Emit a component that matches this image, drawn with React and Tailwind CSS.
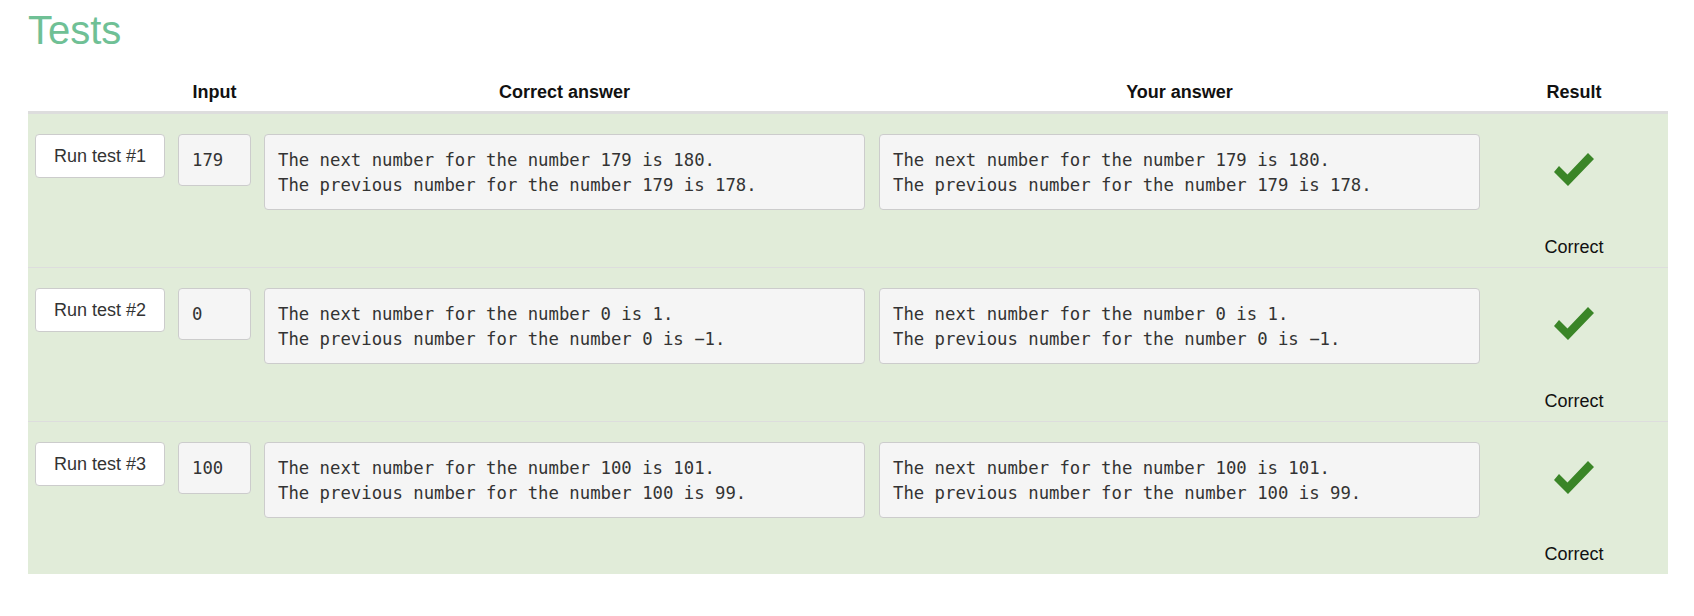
const tests = [
  {
    input: '179',
    expected: ['The next number for the number 179 is 180.', 'The previous number for the number 179 is 178.'],
  },
  {
    input: '0',
    expected: ['The next number for the number 0 is 1.', 'The previous number for the number 0 is \u22121.'],
  },
  {
    input: '100',
    expected: ['The next number for the number 100 is 101.', 'The previous number for the number 100 is 99.'],
  },
]

const mono = { fontFamily: '"DejaVu Sans Mono", "Liberation Mono", monospace' }

function CheckIcon() {
  return (
    <svg width="42" height="35" viewBox="15 12 42 35" className="block">
      <polygon points="21,26 29.5,34.5 50,13 56,19 30,46 16,32" fill="#3a8527" />
    </svg>
  )
}

function AnswerBox({ lines }) {
  return (
    <pre
      className="w-[601px] shrink-0 m-0 px-[13px] pt-[13px] pb-[11px] bg-[#f5f5f5] border border-[#cccccc] rounded-[4px] text-[17.3px] leading-[25px] text-[#333333]"
      style={mono}
    >
      {lines.join('\n')}
    </pre>
  )
}

export default function App() {
  return (
    <div className="min-h-screen bg-white pl-[28px] pr-[26px] font-['Liberation_Sans',Arial,sans-serif]">
      <h1 className="pt-[7px] text-[40px] leading-[46px] font-normal text-[#6fc095]">Tests</h1>

      <div className="w-[1640px]">
        {/* header */}
        <div className="flex gap-[13px] pl-[7px] pt-[27px] pb-[7px] border-b-2 border-[#dddddd] text-[18px] leading-[24px] font-bold text-[#111111]">
          <div className="w-[130px] shrink-0" />
          <div className="w-[73px] shrink-0 text-center">Input</div>
          <div className="w-[601px] shrink-0 text-center">Correct answer</div>
          <div className="w-[601px] shrink-0 text-center ml-px">Your answer</div>
          <div className="flex-1 text-center -ml-[13px]">Result</div>
        </div>

        {tests.map((t, i) => (
          <div
            key={i}
            className={`flex gap-[13px] pl-[7px] border-t border-[#dddddd] bg-[#e1ecd9] ${i === 2 ? 'h-[153px]' : 'h-[154px]'}`}
          >
            <div className="pt-[20px] shrink-0">
              <button className="w-[130px] h-[44px] bg-white border border-[#cccccc] rounded-[4px] text-[18px] text-[#333333] flex items-center justify-center">
                Run test #{i + 1}
              </button>
            </div>
            <div className="pt-[20px] shrink-0">
              <div
                className="w-[73px] px-[13px] pt-[13px] pb-[12px] bg-[#f5f5f5] border border-[#cccccc] rounded-[4px] text-[17.3px] leading-[25px] text-[#333333]"
                style={mono}
              >
                {t.input}
              </div>
            </div>
            <div className="pt-[20px] shrink-0">
              <AnswerBox lines={t.expected} />
            </div>
            <div className="pt-[20px] shrink-0 ml-px">
              <AnswerBox lines={t.expected} />
            </div>
            <div className="flex-1 -ml-[13px] flex flex-col items-center justify-between pt-[38px] pb-[8px]">
              <CheckIcon />
              <div className="text-[18px] leading-[24px] text-[#111111]">Correct</div>
            </div>
          </div>
        ))}
      </div>
    </div>
  )
}
